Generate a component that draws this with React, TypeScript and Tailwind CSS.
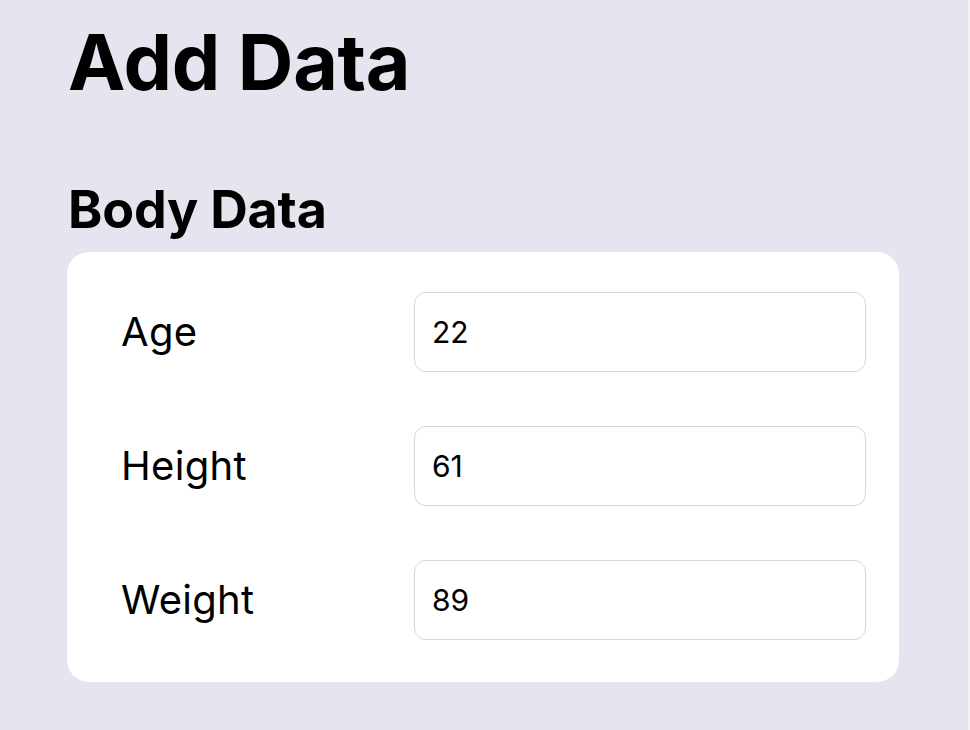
import { useState } from "react";

const fields = [
  { key: "age", label: "Age", value: "22" },
  { key: "height", label: "Height", value: "61" },
  { key: "weight", label: "Weight", value: "89" },
];

export default function App() {
  const [values, setValues] = useState<Record<string, string>>(
    Object.fromEntries(fields.map(f => [f.key, f.value]))
  );

  return (
    <div
      className="min-h-[730px] w-[970px] bg-[#e6e5ef] border-r-2 border-[#f1f1f6] pl-[68px] pt-6 text-black"
      style={{ fontFamily: "Inter, 'Noto Sans', sans-serif" }}
    >
      <h1 className="text-[77px] font-bold leading-none tracking-[-0.3px]">Add Data</h1>

      <h2 className="mt-[83px] text-[52px] font-bold leading-none tracking-[-0.2px]">Body Data</h2>

      <div className="mt-4 w-[832px] -ml-px bg-white rounded-[22px] pt-10 pb-[42px] pl-[54px] pr-[33px] flex flex-col gap-[54px]">
        {fields.map(f => (
          <div key={f.key} className="flex items-center">
            <label className="w-[293px] shrink-0 text-[40px] leading-none tracking-[0.3px]">{f.label}</label>
            <input
              value={values[f.key]}
              onChange={e => setValues(v => ({ ...v, [f.key]: e.target.value }))}
              className="flex-1 min-w-0 h-[80px] rounded-[12px] border border-[#d6d6da] bg-white px-[17px] text-[30px] text-black outline-none"
            />
          </div>
        ))}
      </div>
    </div>
  );
}
